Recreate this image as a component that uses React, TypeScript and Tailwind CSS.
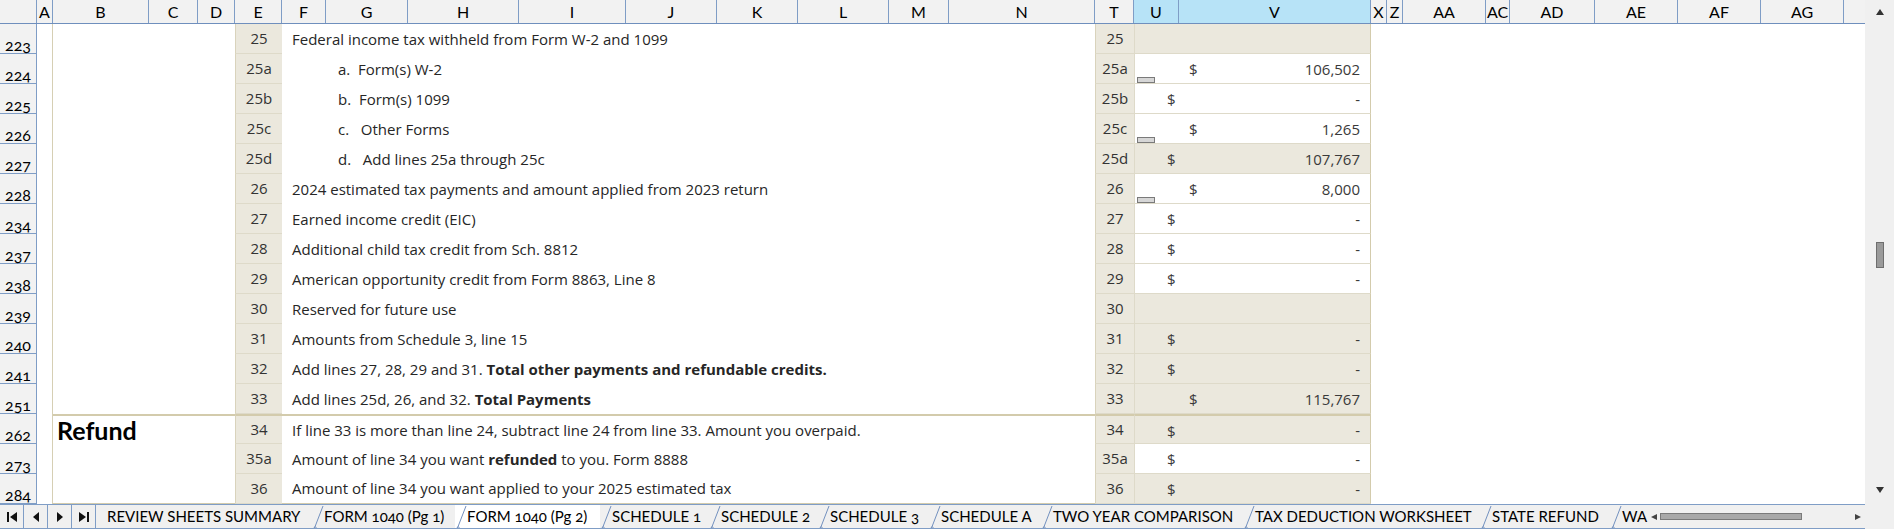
import React from 'react';

type Row = {
  rh: string;
  e: string;
  t: string;
  text: React.ReactNode;
  indent?: boolean;
  bg: 'beige' | 'white';
  d?: 'far' | 'near';
  v?: string;
  box?: boolean;
  refund?: boolean;
  last?: boolean;
};

const rows: Row[] = [
  { rh: '223', e: '25', t: '25', text: 'Federal income tax withheld from Form W-2 and 1099', bg: 'beige' },
  { rh: '224', e: '25a', t: '25a', text: 'a.  Form(s) W-2', indent: true, bg: 'white', d: 'far', v: '106,502', box: true },
  { rh: '225', e: '25b', t: '25b', text: 'b.  Form(s) 1099', indent: true, bg: 'white', d: 'near', v: '-' },
  { rh: '226', e: '25c', t: '25c', text: 'c.   Other Forms', indent: true, bg: 'white', d: 'far', v: '1,265', box: true },
  { rh: '227', e: '25d', t: '25d', text: 'd.   Add lines 25a through 25c', indent: true, bg: 'beige', d: 'near', v: '107,767' },
  { rh: '228', e: '26', t: '26', text: '2024 estimated tax payments and amount applied from 2023 return', bg: 'white', d: 'far', v: '8,000', box: true },
  { rh: '234', e: '27', t: '27', text: 'Earned income credit (EIC)', bg: 'white', d: 'near', v: '-' },
  { rh: '237', e: '28', t: '28', text: 'Additional child tax credit from Sch. 8812', bg: 'white', d: 'near', v: '-' },
  { rh: '238', e: '29', t: '29', text: 'American opportunity credit from Form 8863, Line 8', bg: 'white', d: 'near', v: '-' },
  { rh: '239', e: '30', t: '30', text: 'Reserved for future use', bg: 'beige' },
  { rh: '240', e: '31', t: '31', text: 'Amounts from Schedule 3, line 15', bg: 'beige', d: 'near', v: '-' },
  {
    rh: '241', e: '32', t: '32',
    text: (<>Add lines 27, 28, 29 and 31. <span className="font-bold">Total other payments and refundable credits.</span></>),
    bg: 'beige', d: 'near', v: '-',
  },
  {
    rh: '251', e: '33', t: '33',
    text: (<>Add lines 25d, 26, and 32. <span className="font-bold">Total Payments</span></>),
    bg: 'beige', d: 'far', v: '115,767',
  },
  { rh: '262', e: '34', t: '34', text: 'If line 33 is more than line 24, subtract line 24 from line 33. Amount you overpaid.', bg: 'beige', d: 'near', v: '-', refund: true },
  {
    rh: '273', e: '35a', t: '35a',
    text: (<>Amount of line 34 you want <span className="font-bold">refunded</span> to you. Form 8888</>),
    bg: 'white', d: 'near', v: '-',
  },
  { rh: '284', e: '36', t: '36', text: 'Amount of line 34 you want applied to your 2025 estimated tax', bg: 'beige', d: 'near', v: '-', last: true },
];

const headerCols: { l: string; w: string; sel?: boolean }[] = [
  { l: 'A', w: 'w-[16px]' },
  { l: 'B', w: 'w-[96px]' },
  { l: 'C', w: 'w-[49px]' },
  { l: 'D', w: 'w-[37px]' },
  { l: 'E', w: 'w-[47px]' },
  { l: 'F', w: 'w-[44px]' },
  { l: 'G', w: 'w-[82px]' },
  { l: 'H', w: 'w-[111px]' },
  { l: 'I', w: 'w-[107px]' },
  { l: 'J', w: 'w-[91px]' },
  { l: 'K', w: 'w-[81px]' },
  { l: 'L', w: 'w-[91px]' },
  { l: 'M', w: 'w-[60px]' },
  { l: 'N', w: 'w-[146px]' },
  { l: 'T', w: 'w-[39px]' },
  { l: 'U', w: 'w-[45px]', sel: true },
  { l: 'V', w: 'w-[192px]', sel: true },
  { l: 'X', w: 'w-[16px]' },
  { l: 'Z', w: 'w-[16px]' },
  { l: 'AA', w: 'w-[83px]' },
  { l: 'AC', w: 'w-[24px]' },
  { l: 'AD', w: 'w-[85px]' },
  { l: 'AE', w: 'w-[83px]' },
  { l: 'AF', w: 'w-[83px]' },
  { l: 'AG', w: 'w-[83px]' },
];

const tabs: { label: string; w: string; active?: boolean }[] = [
  { label: 'REVIEW SHEETS SUMMARY', w: 'w-[216px]' },
  { label: 'FORM 1040 (Pg 1)', w: 'w-[143px]' },
  { label: 'FORM 1040 (Pg 2)', w: 'w-[145px]', active: true },
  { label: 'SCHEDULE 1', w: 'w-[109px]' },
  { label: 'SCHEDULE 2', w: 'w-[109px]' },
  { label: 'SCHEDULE 3', w: 'w-[111px]' },
  { label: 'SCHEDULE A', w: 'w-[112px]' },
  { label: 'TWO YEAR COMPARISON', w: 'w-[202px]' },
  { label: 'TAX DEDUCTION WORKSHEET', w: 'w-[237px]' },
  { label: 'STATE REFUND', w: 'w-[130px]' },
  { label: 'WA', w: 'w-[39px]' },
];

const FONT = { fontFamily: 'Lato, "Open Sans", "Noto Sans", sans-serif' };

function Sep() {
  return (
    <svg width="12" height="25" viewBox="0 0 12 25" className="absolute left-0 top-0">
      <path d="M1.5 24 C2.5 21 4 21 4.5 24 M2.5 23 L11 1" fill="none" stroke="#7391bf" strokeWidth="1" />
    </svg>
  );
}

function DataRow({ r }: { r: Row }) {
  const topLine = r.refund ? 'border-t-2 border-t-[#d3cbac]' : '';
  const bottomLine = r.last ? 'border-b border-b-[#d3cbac]' : '';
  const uvBg = r.bg === 'beige' ? 'bg-[#ebe8dd]' : 'bg-white';
  const cell = "font-['Open_Sans'] text-[15px]";
  return (
    <div className="flex h-[30px]">
      <div className="w-[37px] shrink-0 bg-[#f2f2f2] border-r border-b border-[#7f9dc6] flex items-end justify-center text-[16px] leading-[17px] text-black oldstyle-nums">
        {r.rh}
      </div>
      <div className="w-[16px] shrink-0 bg-white border-r border-[#d6cfb4]" />
      <div className={`w-[182px] shrink-0 bg-white flex items-center pl-[4px] ${topLine} ${bottomLine}`}>
        {r.refund && <span className="text-[25px] font-bold text-black leading-none">Refund</span>}
      </div>
      <div className={`w-[47px] shrink-0 bg-[#ebe8dd] border-l border-l-[#d9d3bc] border-b border-b-[#dedac9] flex items-center justify-center ${cell} text-[#333] ${topLine} ${bottomLine}`}>
        {r.e}
      </div>
      <div className={`w-[813px] shrink-0 bg-white flex items-center ${cell} text-[#262626] whitespace-pre ${r.indent ? 'pl-[56px]' : 'pl-[10px]'} ${topLine} ${bottomLine}`}>
        {r.text}
      </div>
      <div className={`w-[39px] shrink-0 bg-[#ebe8dd] border-l border-l-[#d9d3bc] border-b border-b-[#dedac9] flex items-center justify-center ${cell} text-[#333] ${topLine} ${bottomLine}`}>
        {r.t}
      </div>
      <div className={`relative w-[237px] shrink-0 ${uvBg} border-l border-l-[#dedac9] border-r border-r-[#d3cbac] border-b border-b-[#dedac9] flex items-center ${cell} text-[#3a3a3a] ${topLine} ${bottomLine}`}>
        {r.d && (
          <span className={`absolute top-[4px] ${r.d === 'far' ? 'left-[54px]' : 'left-[32px]'}`}>$</span>
        )}
        {r.v && <span className="ml-auto pr-[10px] pt-[2px]">{r.v}</span>}
        {r.box && (
          <div className="absolute left-[2px] bottom-[0px] w-[18px] h-[6px] bg-[#d6d6d6] border border-[#7a7a7a]" />
        )}
      </div>
      <div className="flex-1 bg-white" />
    </div>
  );
}

function NavBtn({ kind }: { kind: 'first' | 'prev' | 'next' | 'last' }) {
  return (
    <div className="w-[24px] h-full flex items-center justify-center border-r border-[#7f9dc6]">
      <svg width="12" height="12" viewBox="0 0 12 12">
        {kind === 'first' && (
          <>
            <rect x="1" y="1" width="2" height="10" fill="#111" />
            <path d="M11 1 L4 6 L11 11 Z" fill="#111" />
          </>
        )}
        {kind === 'prev' && <path d="M9 1 L3 6 L9 11 Z" fill="#111" />}
        {kind === 'next' && <path d="M3 1 L9 6 L3 11 Z" fill="#111" />}
        {kind === 'last' && (
          <>
            <path d="M1 1 L8 6 L1 11 Z" fill="#111" />
            <rect x="9" y="1" width="2" height="10" fill="#111" />
          </>
        )}
      </svg>
    </div>
  );
}

export default function App() {
  return (
    <div className="w-[1894px] h-[529px] overflow-hidden bg-white select-none" style={FONT}>
      <div className="flex h-[504px]">
        <div className="w-[1865px] shrink-0 flex flex-col">
          <div className="flex h-[24px] shrink-0 bg-[#f2f2f2] border-b border-[#6f8fbd]">
            <div className="w-[37px] shrink-0 border-r border-[#7f9dc6]" />
            {headerCols.map((c) => (
              <div
                key={c.l}
                className={`${c.w} shrink-0 flex items-center justify-center border-r border-[#7f9dc6] text-[16px] text-black ${c.sel ? 'bg-[#b7e3f7]' : ''}`}
              >
                {c.l}
              </div>
            ))}
            <div className="flex-1" />
          </div>
          {rows.map((r) => (
            <DataRow key={r.rh} r={r} />
          ))}
        </div>
        <div className="w-[29px] shrink-0 bg-[#f0f0f0] flex flex-col items-center">
          <div className="h-[24px] w-full flex items-center justify-center">
            <svg width="10" height="8" viewBox="0 0 10 8"><path d="M5 1 L9 7 L1 7 Z" fill="#333" /></svg>
          </div>
          <div className="flex-1 w-full flex flex-col items-center pt-[218px]">
            <div className="w-[8px] h-[26px] bg-[#9a9a9a] border border-[#6e6e6e]" />
          </div>
          <div className="h-[22px] w-full flex items-start justify-center pt-[4px]">
            <svg width="10" height="8" viewBox="0 0 10 8"><path d="M1 1 L9 1 L5 7 Z" fill="#333" /></svg>
          </div>
        </div>
      </div>
      <div className="flex h-[25px] bg-[#f0f0f0]">
        <div className="w-[1865px] shrink-0 flex h-full border-t border-[#7f9dc6] border-b">
          <div className="flex h-full">
            <NavBtn kind="first" />
            <NavBtn kind="prev" />
            <NavBtn kind="next" />
            <NavBtn kind="last" />
          </div>
          {tabs.map((t, i) => (
            <div
              key={t.label}
              className={`relative ${t.w} shrink-0 h-full overflow-hidden flex items-center text-[15px] text-black whitespace-nowrap oldstyle-nums ${i === 0 ? 'pl-[11px]' : 'pl-[12px]'} ${t.active ? 'bg-white' : ''}`}
            >
              {i > 0 && <Sep />}
              {t.label}
            </div>
          ))}
          <div className="flex-1 h-full flex items-center">
            <svg width="8" height="8" viewBox="0 0 8 8" className="ml-[1px]"><path d="M7 1 L1 4 L7 7 Z" fill="#444" /></svg>
            <div className="ml-[2px] w-[142px] h-[7px] bg-[#a8a8a8] border border-[#7a7a7a]" />
            <div className="flex-1" />
            <svg width="8" height="8" viewBox="0 0 8 8" className="mr-[3px]"><path d="M1 1 L7 4 L1 7 Z" fill="#444" /></svg>
          </div>
        </div>
        <div className="flex-1 bg-[#f0f0f0]" />
      </div>
    </div>
  );
}
